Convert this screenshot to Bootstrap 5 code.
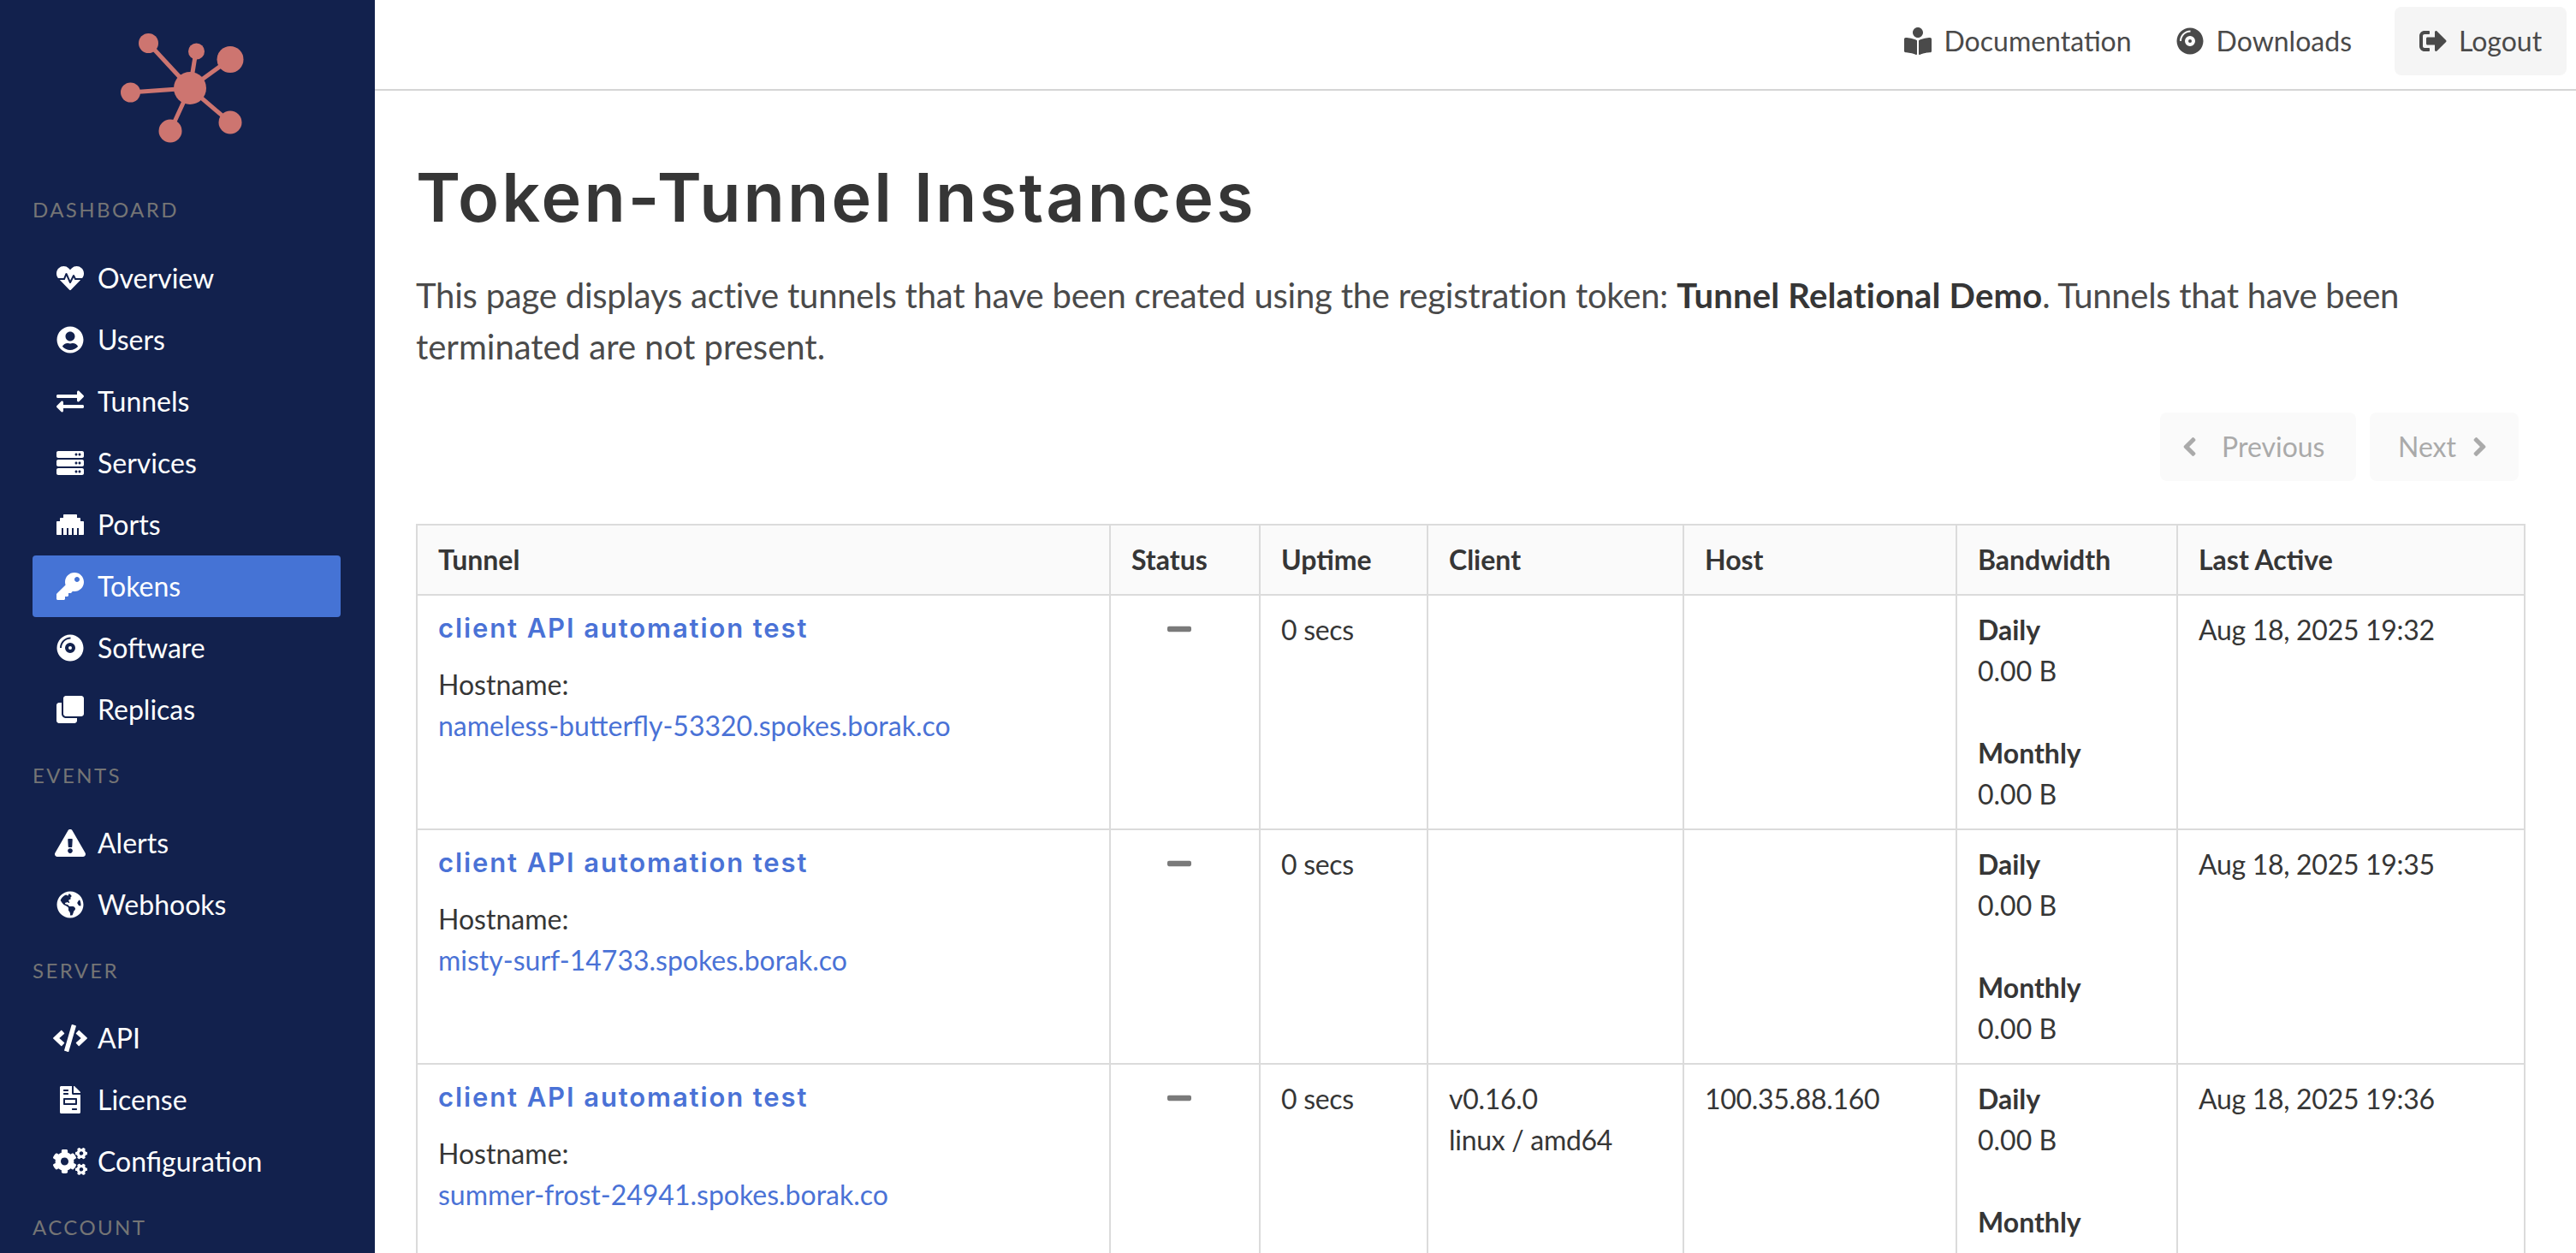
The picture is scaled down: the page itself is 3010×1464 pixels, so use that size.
<!DOCTYPE html>
<html lang="en">
<head>
<meta charset="utf-8">
<title>Token-Tunnel Instances</title>
<link href="https://cdn.jsdelivr.net/npm/bootstrap@5.3.0/dist/css/bootstrap.min.css" rel="stylesheet">
<style>
html,body{height:100%;}
body{font-family:"Lato","Liberation Sans",sans-serif;font-size:32px;line-height:1.5;color:#4a4a4a;overflow:hidden;background:#fff;}
.ico{fill:currentColor;display:block;flex:none;}
.ico-bold{stroke:currentColor;stroke-width:28;}
.side{width:438px;flex:none;height:1464px;background:#12214d;overflow:hidden;padding:0 40px 0 38px;}
.logo-box{height:227px;}
.logo-svg{display:block;margin-left:-38px;}
.side-label{font-size:24px;line-height:36px;letter-spacing:.1em;color:#757575;margin:23px 0 25px;}
.side-label.first{margin-top:0;margin-bottom:26px;}
.side-link{height:72px;color:#fff;text-decoration:none;border-radius:4px;padding-left:24px;}
.side-link.on{background:#4573d5;}
.ic-slot{width:40px;margin-right:12px;flex:none;}
.topbar{height:106px;border-bottom:2px solid #d5d5d5;padding:0 12px 8px 0;}
.top-link{color:#4a4a4a;text-decoration:none;}
.top-link.one{margin-right:52px;gap:15px;}
.top-link.two{margin-right:50px;gap:15px;}
.top-btn{height:80px;width:201px;background:#f5f5f5;border-radius:8px;padding-left:29px;gap:14px;}
.content-area{padding:0 60px 0 48px;}
.page-title{font-family:"Inter","Liberation Sans",sans-serif;font-weight:600;font-size:79px;line-height:96px;color:#363636;margin:76px 0 37px;letter-spacing:3.1px;}
.intro{font-size:40px;line-height:60px;color:#4a4a4a;margin:0;}
.intro strong{color:#363636;font-weight:700;letter-spacing:.18px;}
.tight-a{letter-spacing:-.22px;}
.tight-b{letter-spacing:-.3px;}
.pager{margin:47px 8px 50px 0;gap:16px;}
.pg-btn,.pg-btn:disabled{height:80px;background:#fafafa;border:0;border-radius:8px;color:#aaa;font-size:32px;opacity:1;padding:0;}
.pg-prev,.pg-prev:disabled{width:229px;padding-left:27px;gap:30px;}
.pg-next,.pg-next:disabled{width:174px;padding-left:33px;gap:20px;}
.tunnel-table{table-layout:fixed;width:2463px;margin:0;border-color:#dbdbdb;color:#4a4a4a;}
.tunnel-table th,.tunnel-table td{padding:16px 24px;border:2px solid #dbdbdb;line-height:48px;vertical-align:top;font-size:32px;}
.tunnel-table th{background:#fafafa;color:#363636;font-weight:700;}
.tunnel-table td{color:#363636;}
.t-name{font-family:"Inter","Liberation Sans",sans-serif;font-weight:600;font-size:31px;letter-spacing:1.9px;color:#4a72d6;text-decoration:none;display:block;margin:-2px 0 18px;}
.t-host{color:#4a72d6;text-decoration:none;}
.band-b{font-weight:700;color:#363636;}
.dash{color:#7a7a7a;margin:6px 0 0 42px;}
.when{letter-spacing:-.3px;}
.c1{width:810px}.c2{width:175px}.c3{width:196px}.c4{width:299px}.c5{width:319px}.c6{width:258px}.c7{width:406px}
</style>
</head>
<body>
<svg width="0" height="0" class="position-absolute">
<defs>
<symbol id="i-heart" viewBox="0 0 512 512"><path d="M320.2 243.8l-49.7 99.4c-6 12.1-23.4 11.7-28.9-.6l-56.9-126.3-30 71.7H60.6l182.5 186.5c7.1 7.3 18.6 7.3 25.7 0L451.4 288H342.3l-22.1-44.2zM473.7 73.9l-2.4-2.5c-51.5-52.6-135.8-52.6-187.4 0L256 100l-27.9-28.5c-51.5-52.7-135.9-52.7-187.4 0l-2.4 2.4C-10.4 123.7-12.5 203 31 256h102.4l35.9-86.2c5.4-12.9 23.6-13.2 29.4-.4l58.2 129.3 49-97.9c5.9-11.8 22.7-11.8 28.6 0l27.6 55.2H481c43.5-53 41.4-132.3-7.3-182.1z"/></symbol>
<symbol id="i-user" viewBox="0 0 496 512"><path d="M248 8C111 8 0 119 0 256s111 248 248 248 248-111 248-248S385 8 248 8zm0 96c48.6 0 88 39.4 88 88s-39.4 88-88 88-88-39.4-88-88 39.4-88 88-88zm0 344c-58.7 0-111.3-26.6-146.5-68.2 18.8-35.4 55.6-59.8 98.5-59.8 2.4 0 4.8.4 7.1 1.1 13 4.2 26.6 6.9 40.9 6.9 14.3 0 28-2.7 40.9-6.9 2.3-.7 4.7-1.1 7.1-1.1 42.9 0 79.7 24.4 98.5 59.8C359.3 421.4 306.7 448 248 448z"/></symbol>
<symbol id="i-exch" viewBox="0 0 512 512"><path d="M0 168v-16c0-13.255 10.745-24 24-24h360V80c0-21.367 25.899-32.042 40.971-16.971l80 80c9.372 9.373 9.372 24.569 0 33.941l-80 80C409.956 271.982 384 261.456 384 240v-48H24c-13.255 0-24-10.745-24-24zm488 152H128v-48c0-21.314-25.862-32.08-40.971-16.971l-80 80c-9.372 9.373-9.372 24.569 0 33.941l80 80C102.057 463.997 128 453.437 128 432v-48h360c13.255 0 24-10.745 24-24v-16c0-13.255-10.745-24-24-24z"/></symbol>
<symbol id="i-server" viewBox="0 0 512 512"><path d="M480 160H32c-17.673 0-32-14.327-32-32V64c0-17.673 14.327-32 32-32h448c17.673 0 32 14.327 32 32v64c0 17.673-14.327 32-32 32zm-48-88c-13.255 0-24 10.745-24 24s10.745 24 24 24 24-10.745 24-24-10.745-24-24-24zm-64 0c-13.255 0-24 10.745-24 24s10.745 24 24 24 24-10.745 24-24-10.745-24-24-24zm112 248H32c-17.673 0-32-14.327-32-32v-64c0-17.673 14.327-32 32-32h448c17.673 0 32 14.327 32 32v64c0 17.673-14.327 32-32 32zm-48-88c-13.255 0-24 10.745-24 24s10.745 24 24 24 24-10.745 24-24-10.745-24-24-24zm-64 0c-13.255 0-24 10.745-24 24s10.745 24 24 24 24-10.745 24-24-10.745-24-24-24zm112 248H32c-17.673 0-32-14.327-32-32v-64c0-17.673 14.327-32 32-32h448c17.673 0 32 14.327 32 32v64c0 17.673-14.327 32-32 32zm-48-88c-13.255 0-24 10.745-24 24s10.745 24 24 24 24-10.745 24-24-10.745-24-24-24zm-64 0c-13.255 0-24 10.745-24 24s10.745 24 24 24 24-10.745 24-24-10.745-24-24-24z"/></symbol>
<symbol id="i-eth" viewBox="0 0 512 512"><path d="M496 192h-48v-48c0-8.8-7.2-16-16-16h-48V80c0-8.8-7.2-16-16-16H144c-8.8 0-16 7.2-16 16v48H80c-8.8 0-16 7.2-16 16v48H16c-8.8 0-16 7.2-16 16v224c0 8.8 7.2 16 16 16h80V320h32v128h64V320h32v128h64V320h32v128h64V320h32v128h80c8.8 0 16-7.2 16-16V208c0-8.8-7.2-16-16-16z"/></symbol>
<symbol id="i-key" viewBox="0 0 512 512"><path d="M512 176.001C512 273.203 433.202 352 336 352c-11.22 0-22.19-1.062-32.827-3.069l-24.012 27.014A23.999 23.999 0 0 1 261.223 384H224v40c0 13.255-10.745 24-24 24h-40v40c0 13.255-10.745 24-24 24H24c-13.255 0-24-10.745-24-24v-78.059c0-6.365 2.529-12.47 7.029-16.971l161.802-161.802C163.108 213.814 160 195.271 160 176 160 78.798 238.797.001 335.999 0 433.488-.001 512 78.511 512 176.001zM336 128c0 26.51 21.49 48 48 48s48-21.49 48-48-21.49-48-48-48-48 21.49-48 48z"/></symbol>
<symbol id="i-disc" viewBox="0 0 496 512"><path d="M248,8C111,8,0,119,0,256S111,504,248,504,496,393,496,256,385,8,248,8ZM88,256H56C56,145.7,145.7,56,256,56v32C163.4,88,88,163.4,88,256Zm160,96a96,96,0,1,1,96-96A96,96,0,0,1,248,352Zm0-128a32,32,0,1,0,32,32A32,32,0,0,0,248,224Z"/></symbol>
<symbol id="i-clone" viewBox="0 0 512 512"><path d="M464 0c26.51 0 48 21.49 48 48v288c0 26.51-21.49 48-48 48H176c-26.51 0-48-21.49-48-48V48c0-26.51 21.49-48 48-48h288M176 416c-44.112 0-80-35.888-80-80V128H48c-26.51 0-48 21.49-48 48v288c0 26.51 21.49 48 48 48h288c26.51 0 48-21.49 48-48v-48H176z"/></symbol>
<symbol id="i-warn" viewBox="0 0 576 512"><path d="M569.517 440.013C587.975 472.007 564.806 512 527.94 512H48.054c-36.937 0-59.999-40.055-41.577-71.987L246.423 23.985c18.467-32.009 64.72-31.951 83.154 0l239.94 416.028zM288 354c-25.405 0-46 20.595-46 46s20.595 46 46 46 46-20.595 46-46-20.595-46-46-46zm-43.673-165.346l7.418 136c.347 6.364 5.609 11.346 11.982 11.346h48.546c6.373 0 11.635-4.982 11.982-11.346l7.418-136c.375-6.874-5.098-12.654-11.982-12.654h-63.383c-6.884 0-12.356 5.78-11.981 12.654z"/></symbol>
<symbol id="i-globe" viewBox="0 0 496 512"><path d="M248 8C111.03 8 0 119.03 0 256s111.03 248 248 248 248-111.03 248-248S384.97 8 248 8zm82.29 357.6c-3.9 3.88-7.99 7.95-11.31 11.28-2.99 3-5.1 6.7-6.17 10.71-1.51 5.66-2.73 11.38-4.77 16.87l-17.39 46.85c-13.76 3-28 4.69-42.65 4.69v-27.38c1.69-12.62-7.64-36.26-22.63-51.25-6-6-9.37-14.14-9.37-22.63v-32.01c0-11.64-6.27-22.34-16.46-27.97-14.37-7.95-34.81-19.06-48.81-26.11-11.48-5.78-22.1-13.14-31.65-21.75l-.8-.72a114.792 114.792 0 0 1-18.06-20.74c-9.38-13.77-24.66-36.42-34.59-51.14 20.47-45.5 57.36-82.04 103.2-101.89l24.01 12.01C203.48 89.74 216 82.01 216 70.11v-11.3c7.99-1.29 16.12-2.11 24.42-2.43l28.3 28.3c6.25 6.25 6.25 16.38 0 22.63L264 112l-10.34 10.34c-3.12 3.12-3.12 8.19 0 11.31l4.69 4.69c3.12 3.12 3.12 8.19 0 11.31l-8 8a8.008 8.008 0 0 1-5.66 2.34h-8.99c-2.08 0-4.08.81-5.58 2.27l-9.92 9.65a8.008 8.008 0 0 0-1.58 9.31l15.59 31.19c2.66 5.32-1.21 11.58-7.15 11.58h-5.64c-1.93 0-3.79-.7-5.24-1.96l-9.28-8.06a16.017 16.017 0 0 0-15.55-3.1l-31.17 10.39a11.95 11.95 0 0 0-8.17 11.34c0 4.53 2.56 8.66 6.61 10.69l11.08 5.54c9.41 4.71 19.79 7.16 30.31 7.16s22.59 27.29 32 32h66.75c8.49 0 16.62 3.37 22.63 9.37l13.69 13.69a30.503 30.503 0 0 1 8.93 21.57 46.536 46.536 0 0 1-13.72 32.98zM417 274.25c-5.79-1.45-10.84-5-14.15-9.97l-17.98-26.97a23.97 23.97 0 0 1 0-26.62l19.59-29.38c2.32-3.47 5.5-6.29 9.24-8.15l12.98-6.49C440.2 193.59 448 223.87 448 256c0 8.67-.74 17.16-1.82 25.54L417 274.25z"/></symbol>
<symbol id="i-code" viewBox="0 0 640 512"><path d="M278.9 511.5l-61-17.7c-6.4-1.8-10-8.5-8.2-14.9L346.2 8.7c1.8-6.4 8.5-10 14.9-8.2l61 17.7c6.4 1.8 10 8.5 8.2 14.9L293.8 503.3c-1.9 6.4-8.5 10.1-14.9 8.2zm-114-112.2l43.5-46.4c4.6-4.9 4.3-12.7-.8-17.2L117 256l90.6-79.7c5.1-4.5 5.5-12.3.8-17.2l-43.5-46.4c-4.5-4.8-12.1-5.1-17-.5L3.8 247.2c-5.1 4.7-5.1 12.8 0 17.5l144.1 135.1c4.9 4.6 12.5 4.4 17-.5zm327.2.6l144.1-135.1c5.1-4.7 5.1-12.8 0-17.5L492.1 112.1c-4.8-4.5-12.4-4.3-17 .5L431.6 159c-4.6 4.9-4.3 12.7.8 17.2L523 256l-90.6 79.7c-5.1 4.5-5.5 12.3-.8 17.2l43.5 46.4c4.5 4.9 12.1 5.1 17 .6z"/></symbol>
<symbol id="i-file" viewBox="0 0 384 512"><path d="M288 256H96v64h192v-64zm89-151L279.1 7c-4.5-4.5-10.6-7-17-7H256v128h128v-6.1c0-6.3-2.5-12.4-7-16.9zm-153 31V0H24C10.7 0 0 10.7 0 24v464c0 13.3 10.7 24 24 24h336c13.3 0 24-10.7 24-24V160H248c-13.2 0-24-10.8-24-24zM64 72c0-4.42 3.58-8 8-8h80c4.42 0 8 3.58 8 8v16c0 4.42-3.58 8-8 8H72c-4.42 0-8-3.58-8-8V72zm0 64c0-4.42 3.58-8 8-8h80c4.42 0 8 3.58 8 8v16c0 4.42-3.58 8-8 8H72c-4.42 0-8-3.58-8-8v-16zm256 304c0 4.42-3.58 8-8 8h-80c-4.42 0-8-3.58-8-8v-16c0-4.42 3.58-8 8-8h80c4.42 0 8 3.58 8 8v16zm0-200v96c0 8.84-7.16 16-16 16H80c-8.84 0-16-7.16-16-16v-96c0-8.84 7.16-16 16-16h224c8.84 0 16 7.16 16 16z"/></symbol>
<symbol id="i-cogs" viewBox="0 0 640 512"><path d="M512.1 191l-8.2 14.3c-3 5.3-9.4 7.5-15.1 5.4-11.8-4.4-22.6-10.7-32.1-18.6-4.6-3.8-5.8-10.5-2.8-15.7l8.2-14.3c-6.9-8-12.3-17.3-15.9-27.4h-16.5c-6 0-11.2-4.3-12.2-10.3-2-12-2.1-24.6 0-37.1 1-6 6.2-10.4 12.2-10.4h16.5c3.6-10.1 9-19.4 15.9-27.4l-8.2-14.3c-3-5.2-1.9-11.9 2.8-15.7 9.5-7.9 20.4-14.2 32.1-18.6 5.7-2.1 12.1.1 15.1 5.4l8.2 14.3c10.5-1.9 21.2-1.9 31.7 0L552 6.3c3-5.3 9.4-7.5 15.1-5.4 11.8 4.4 22.6 10.7 32.1 18.6 4.6 3.8 5.8 10.5 2.8 15.7l-8.2 14.3c6.9 8 12.3 17.3 15.9 27.4h16.5c6 0 11.2 4.3 12.2 10.3 2 12 2.1 24.6 0 37.1-1 6-6.2 10.4-12.2 10.4h-16.5c-3.6 10.1-9 19.4-15.9 27.4l8.2 14.3c3 5.2 1.9 11.9-2.8 15.7-9.5 7.9-20.4 14.2-32.1 18.6-5.7 2.1-12.1-.1-15.1-5.4l-8.2-14.3c-10.4 1.9-21.2 1.9-31.7 0zm-10.5-58.8c38.5 29.6 82.4-14.3 52.8-52.8-38.5-29.7-82.4 14.3-52.8 52.8zM386.3 286.1l33.7 16.8c10.1 5.8 14.5 18.1 10.5 29.1-8.9 24.2-26.4 46.4-42.6 65.8-7.4 8.9-20.2 11.1-30.3 5.3l-29.1-16.8c-16 13.7-34.6 24.6-54.9 31.7v33.6c0 11.6-8.3 21.6-19.7 23.6-24.6 4.2-50.4 4.4-75.9 0-11.5-2-20-11.9-20-23.6V418c-20.3-7.2-38.9-18-54.9-31.7L74 403c-10 5.8-22.9 3.6-30.3-5.3-16.2-19.4-33.3-41.6-42.2-65.7-4-10.9.4-23.2 10.5-29.1l33.3-16.8c-3.9-20.9-3.9-42.4 0-63.4L12 205.8c-10.1-5.8-14.6-18.1-10.5-29 8.9-24.2 26-46.4 42.2-65.8 7.4-8.9 20.2-11.1 30.3-5.3l29.1 16.8c16-13.7 34.6-24.6 54.9-31.7V57.1c0-11.5 8.2-21.5 19.6-23.5 24.6-4.2 50.5-4.4 76-.1 11.5 2 20 11.9 20 23.6v33.6c20.3 7.2 38.9 18 54.9 31.7l29.1-16.8c10-5.8 22.9-3.6 30.3 5.3 16.2 19.4 33.2 41.6 42.1 65.8 4 10.9.1 23.2-10 29.1l-33.7 16.8c3.9 21 3.9 42.5 0 63.5zm-117.6 21.1c59.2-77-28.7-164.9-105.7-105.7-59.2 77 28.7 164.9 105.7 105.7zm243.4 182.7l-8.2 14.3c-3 5.3-9.4 7.5-15.1 5.4-11.8-4.4-22.6-10.7-32.1-18.6-4.6-3.8-5.8-10.5-2.8-15.7l8.2-14.3c-6.9-8-12.3-17.3-15.9-27.4h-16.5c-6 0-11.2-4.3-12.2-10.3-2-12-2.1-24.6 0-37.1 1-6 6.2-10.4 12.2-10.4h16.5c3.6-10.1 9-19.4 15.9-27.4l-8.2-14.3c-3-5.2-1.9-11.9 2.8-15.7 9.5-7.9 20.4-14.2 32.1-18.6 5.7-2.1 12.1.1 15.1 5.4l8.2 14.3c10.5-1.9 21.2-1.9 31.7 0l8.2-14.3c3-5.3 9.4-7.5 15.1-5.4 11.8 4.4 22.6 10.7 32.1 18.6 4.6 3.8 5.8 10.5 2.8 15.7l-8.2 14.3c6.9 8 12.3 17.3 15.9 27.4h16.5c6 0 11.2 4.3 12.2 10.3 2 12 2.1 24.6 0 37.1-1 6-6.2 10.4-12.2 10.4h-16.5c-3.6 10.1-9 19.4-15.9 27.4l8.2 14.3c3 5.2 1.9 11.9-2.8 15.7-9.5 7.9-20.4 14.2-32.1 18.6-5.7 2.1-12.1-.1-15.1-5.4l-8.2-14.3c-10.4 1.9-21.2 1.9-31.7 0zM501.6 431c38.5 29.6 82.4-14.3 52.8-52.8-38.5-29.6-82.4 14.3-52.8 52.8z"/></symbol>
<symbol id="i-book" viewBox="0 0 512 512"><path d="M352 96c0-53.02-42.98-96-96-96s-96 42.98-96 96 42.98 96 96 96 96-42.98 96-96zM233.59 241.1c-59.33-36.32-155.43-46.3-203.79-49.05C13.55 191.13 0 203.51 0 219.14v222.8c0 14.33 11.59 26.28 26.49 27.05 43.66 2.29 131.99 10.68 193.04 41.43 9.37 4.72 20.48-1.71 20.48-11.87V252.56c-.01-4.67-2.32-8.95-6.42-11.46zm248.61-49.05c-48.35 2.74-144.46 12.73-203.78 49.05-4.1 2.51-6.41 6.96-6.41 11.63v245.79c0 10.19 11.14 16.63 20.54 11.9 61.04-30.72 149.32-39.11 192.97-41.4 14.9-.78 26.49-12.73 26.49-27.06V219.14c-.01-15.63-13.56-28.01-29.81-27.09z"/></symbol>
<symbol id="i-out" viewBox="0 0 512 512"><path d="M497 273L329 441c-15 15-41 4.5-41-17v-96H152c-13.3 0-24-10.7-24-24v-96c0-13.3 10.7-24 24-24h136V88c0-21.4 25.9-32 41-17l168 168c9.3 9.4 9.3 24.6 0 34zM192 436v-40c0-6.6-5.4-12-12-12H96c-17.7 0-32-14.3-32-32V160c0-17.7 14.3-32 32-32h84c6.6 0 12-5.4 12-12V76c0-6.6-5.4-12-12-12H96c-53 0-96 43-96 96v192c0 53 43 96 96 96h84c6.6 0 12-5.4 12-12z"/></symbol>
<symbol id="i-left" viewBox="0 0 320 512"><path d="M34.52 239.03L228.87 44.69c9.37-9.37 24.57-9.37 33.94 0l22.67 22.67c9.36 9.36 9.37 24.52.04 33.9L131.49 256l154.02 154.75c9.34 9.38 9.32 24.54-.04 33.9l-22.67 22.67c-9.37 9.37-24.57 9.37-33.94 0L34.52 272.97c-9.37-9.37-9.37-24.57 0-33.94z"/></symbol>
<symbol id="i-right" viewBox="0 0 320 512"><path d="M285.476 272.971L91.132 467.314c-9.373 9.373-24.569 9.373-33.941 0l-22.667-22.667c-9.357-9.357-9.375-24.522-.04-33.901L188.505 256 34.484 101.255c-9.335-9.379-9.317-24.544.04-33.901l22.667-22.667c9.373-9.373 24.569-9.373 33.941 0L285.475 239.03c9.373 9.372 9.373 24.568.001 33.941z"/></symbol>
<symbol id="i-minus" viewBox="0 0 448 512" preserveAspectRatio="none"><path d="M416 208H32c-17.67 0-32 14.33-32 32v32c0 17.67 14.33 32 32 32h384c17.67 0 32-14.33 32-32v-32c0-17.67-14.33-32-32-32z"/></symbol>
</defs>
</svg>
<div class="d-flex">
<aside class="side">
  <div class="logo-box">
    <svg class="logo-svg" width="438" height="180" viewBox="0 0 438 180" fill="#cd7570" stroke="#cd7570" stroke-width="0">
      <g stroke-width="5"><line x1="222" y1="103" x2="173" y2="50"/><line x1="222" y1="103" x2="229" y2="60"/><line x1="222" y1="103" x2="269" y2="69"/><line x1="222" y1="103" x2="152" y2="108"/><line x1="222" y1="103" x2="199" y2="153"/><line x1="222" y1="103" x2="269" y2="143"/></g>
      <circle cx="222" cy="103" r="19"/><circle cx="173.500" cy="50.500" r="11.500"/><circle cx="229.500" cy="60" r="9.500"/><circle cx="269" cy="69.500" r="15.500"/><circle cx="152.500" cy="108" r="11.500"/><circle cx="199" cy="153" r="13.500"/><circle cx="269" cy="143" r="13.500"/>
    </svg>
  </div>
  <div class="side-label first">DASHBOARD</div>
  <div class="d-flex flex-column">
    <a class="side-link d-flex align-items-center" href="#"><span class="ic-slot d-flex justify-content-center"><svg class="ico" width="32" height="32"><use href="#i-heart"/></svg></span>Overview</a>
    <a class="side-link d-flex align-items-center" href="#"><span class="ic-slot d-flex justify-content-center"><svg class="ico" width="32" height="32"><use href="#i-user"/></svg></span>Users</a>
    <a class="side-link d-flex align-items-center" href="#"><span class="ic-slot d-flex justify-content-center"><svg class="ico" width="32" height="32"><use href="#i-exch"/></svg></span>Tunnels</a>
    <a class="side-link d-flex align-items-center" href="#"><span class="ic-slot d-flex justify-content-center"><svg class="ico" width="32" height="32"><use href="#i-server"/></svg></span>Services</a>
    <a class="side-link d-flex align-items-center" href="#"><span class="ic-slot d-flex justify-content-center"><svg class="ico" width="32" height="32"><use href="#i-eth"/></svg></span>Ports</a>
    <a class="side-link on d-flex align-items-center" href="#"><span class="ic-slot d-flex justify-content-center"><svg class="ico" width="32" height="32"><use href="#i-key"/></svg></span>Tokens</a>
    <a class="side-link d-flex align-items-center" href="#"><span class="ic-slot d-flex justify-content-center"><svg class="ico" width="32" height="32"><use href="#i-disc"/></svg></span>Software</a>
    <a class="side-link d-flex align-items-center" href="#"><span class="ic-slot d-flex justify-content-center"><svg class="ico" width="32" height="32"><use href="#i-clone"/></svg></span>Replicas</a>
  </div>
  <div class="side-label">EVENTS</div>
  <div class="d-flex flex-column">
    <a class="side-link d-flex align-items-center" href="#"><span class="ic-slot d-flex justify-content-center"><svg class="ico" width="36" height="32"><use href="#i-warn"/></svg></span>Alerts</a>
    <a class="side-link d-flex align-items-center" href="#"><span class="ic-slot d-flex justify-content-center"><svg class="ico" width="32" height="32"><use href="#i-globe"/></svg></span>Webhooks</a>
  </div>
  <div class="side-label">SERVER</div>
  <div class="d-flex flex-column">
    <a class="side-link d-flex align-items-center" href="#"><span class="ic-slot d-flex justify-content-center"><svg class="ico" width="40" height="32"><use href="#i-code"/></svg></span>API</a>
    <a class="side-link d-flex align-items-center" href="#"><span class="ic-slot d-flex justify-content-center"><svg class="ico" width="24" height="32"><use href="#i-file"/></svg></span>License</a>
    <a class="side-link d-flex align-items-center" href="#"><span class="ic-slot d-flex justify-content-center"><svg class="ico" width="40" height="32"><use href="#i-cogs"/></svg></span>Configuration</a>
  </div>
  <div class="side-label">ACCOUNT</div>
</aside>
<main class="flex-grow-1">
  <nav class="topbar d-flex align-items-center justify-content-end">
    <a class="top-link one d-flex align-items-center" href="#"><svg class="ico" width="32" height="32"><use href="#i-book"/></svg>Documentation</a>
    <a class="top-link two d-flex align-items-center" href="#"><svg class="ico" width="32" height="32"><use href="#i-disc"/></svg>Downloads</a>
    <a class="top-link top-btn d-flex align-items-center" href="#"><svg class="ico" width="32" height="32"><use href="#i-out"/></svg>Logout</a>
  </nav>
  <div class="content-area">
    <h1 class="page-title">Token-Tunnel Instances</h1>
    <p class="intro"><span class="tight-a">This page displays active tunnels that have been created using the registration token: </span><strong>Tunnel Relational Demo</strong><span class="tight-b">. Tunnels that have been</span> terminated are not present.</p>
    <div class="pager d-flex justify-content-end">
      <button class="btn pg-btn pg-prev d-flex align-items-center" disabled><svg class="ico ico-bold" width="15" height="24"><use href="#i-left"/></svg>Previous</button>
      <button class="btn pg-btn pg-next d-flex align-items-center" disabled>Next<svg class="ico ico-bold" width="15" height="24"><use href="#i-right"/></svg></button>
    </div>
    <table class="table table-bordered tunnel-table">
      <colgroup><col class="c1"><col class="c2"><col class="c3"><col class="c4"><col class="c5"><col class="c6"><col class="c7"></colgroup>
      <thead><tr><th>Tunnel</th><th>Status</th><th>Uptime</th><th>Client</th><th>Host</th><th>Bandwidth</th><th>Last Active</th></tr></thead>
      <tbody>
        <tr><td><a class="t-name" href="#">client API automation test</a>Hostname:<br><a class="t-host" href="#">nameless-butterfly-53320.spokes.borak.co</a></td><td><svg class="ico dash" width="28" height="34"><use href="#i-minus"/></svg></td><td class="when">0 secs</td><td></td><td></td><td><span class="band-b">Daily</span><br>0.00 B<br><br><span class="band-b">Monthly</span><br>0.00 B</td><td class="when">Aug 18, 2025 19:32</td></tr>
        <tr><td><a class="t-name" href="#">client API automation test</a>Hostname:<br><a class="t-host" href="#">misty-surf-14733.spokes.borak.co</a></td><td><svg class="ico dash" width="28" height="34"><use href="#i-minus"/></svg></td><td class="when">0 secs</td><td></td><td></td><td><span class="band-b">Daily</span><br>0.00 B<br><br><span class="band-b">Monthly</span><br>0.00 B</td><td class="when">Aug 18, 2025 19:35</td></tr>
        <tr><td><a class="t-name" href="#">client API automation test</a>Hostname:<br><a class="t-host" href="#">summer-frost-24941.spokes.borak.co</a></td><td><svg class="ico dash" width="28" height="34"><use href="#i-minus"/></svg></td><td class="when">0 secs</td><td class="when">v0.16.0<br>linux / amd64</td><td class="when">100.35.88.160</td><td><span class="band-b">Daily</span><br>0.00 B<br><br><span class="band-b">Monthly</span><br>0.00 B</td><td class="when">Aug 18, 2025 19:36</td></tr>
      </tbody>
    </table>
  </div>
</main>
</div>
<script src="https://cdn.jsdelivr.net/npm/bootstrap@5.3.0/dist/js/bootstrap.bundle.min.js"></script>
</body>
</html>
